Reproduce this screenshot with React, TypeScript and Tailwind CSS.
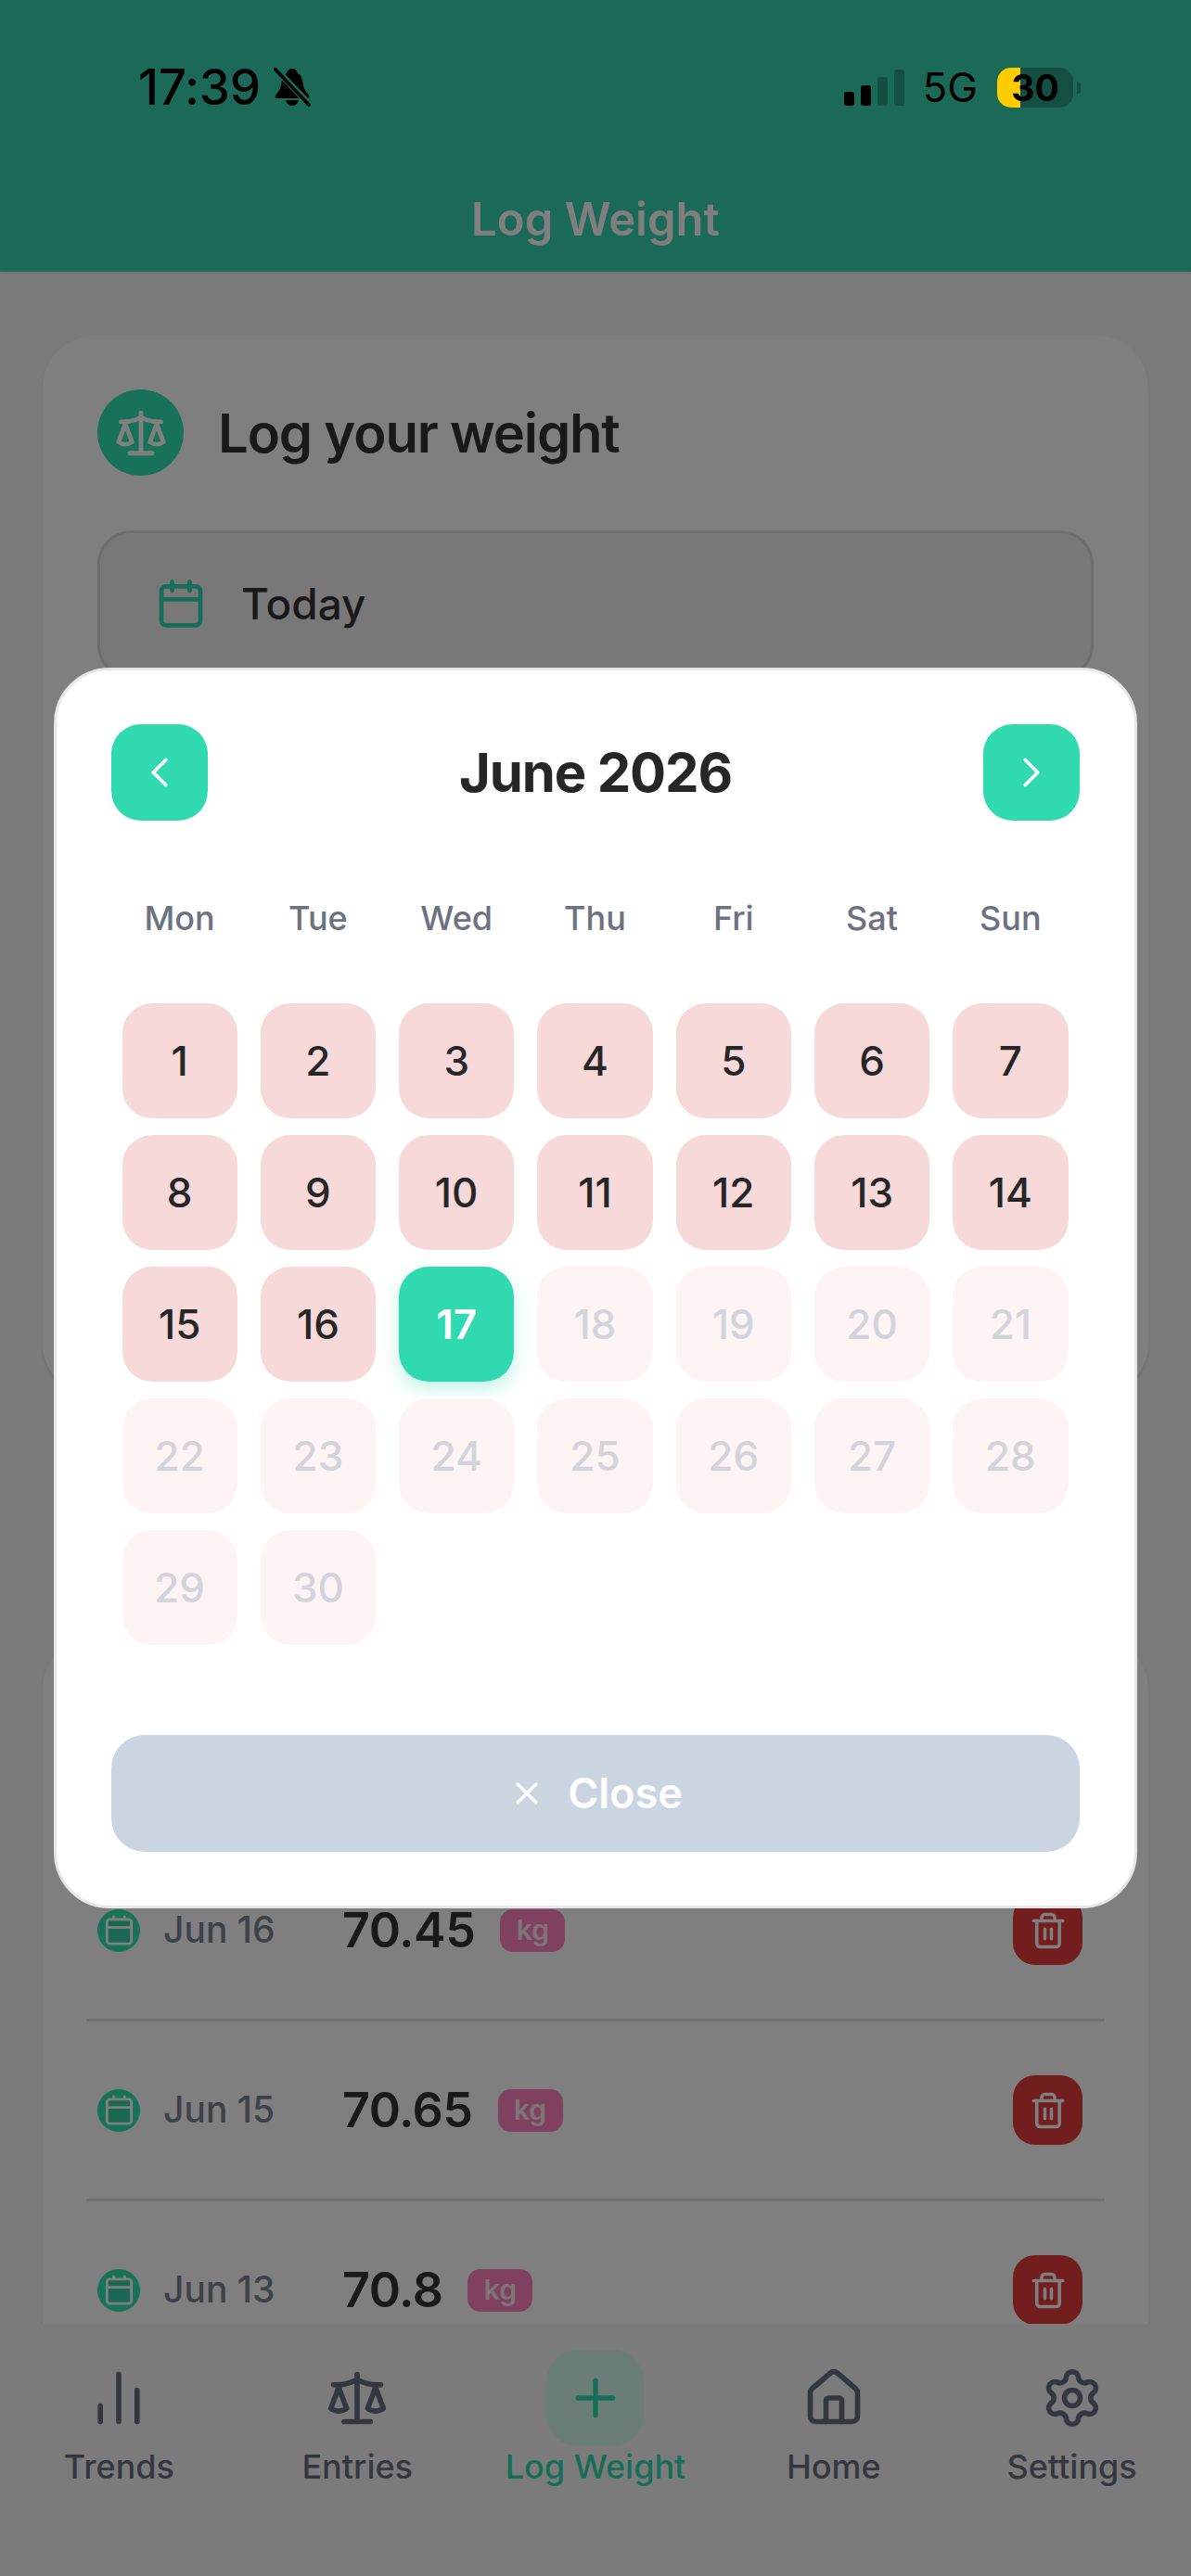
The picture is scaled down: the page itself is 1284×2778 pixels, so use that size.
import { Calendar, ChevronLeft, ChevronRight, ChartNoAxesColumn, House, Plus, Scale, Settings, Trash2, X } from "lucide-react";

const weekDays = ["Mon", "Tue", "Wed", "Thu", "Fri", "Sat", "Sun"];
const days = Array.from({ length: 30 }, (_, i) => i + 1);

const entries = [
  { date: "Jun 16", weight: "70.45" },
  { date: "Jun 15", weight: "70.65" },
  { date: "Jun 13", weight: "70.8" },
];

const navItems = [
  { label: "Trends", icon: ChartNoAxesColumn },
  { label: "Entries", icon: Scale },
  { label: "Log Weight", icon: Plus, active: true },
  { label: "Home", icon: House },
  { label: "Settings", icon: Settings },
];

function StatusBar() {
  return (
    <div className="absolute left-0 top-0 z-20 flex h-[190px] w-full items-start justify-between pl-[149px] pr-[119px] pt-[66px] text-black">
      <div className="flex items-center gap-[14px]">
        <span className="text-[53px] font-medium leading-[56px] tracking-[-0.005em]">17:39</span>
        <svg width="40" height="42" viewBox="0 0 40 42">
          <path d="M20 1c3 0 5 2 6 5 4 2 5 7 6 13 1 5 3 7 6 11 1 2 0 3-2 3H4c-2 0-3-1-2-3 3-4 5-6 6-11 1-6 2-11 6-13 1-3 3-5 6-5z" fill="#000" />
          <path d="M13 35h14c-1 4-4 6-7 6s-6-2-7-6z" fill="#000" />
          <path d="M2 1l37 39" stroke="#1b6a58" strokeWidth="7" />
          <path d="M1 1l37 39" stroke="#000" strokeWidth="3.5" strokeLinecap="round" />
        </svg>
      </div>
      <div className="flex items-center">
        <div className="flex items-end gap-[7px]">
          <div className="h-[15px] w-[11px] rounded-[3px] bg-black" />
          <div className="h-[22px] w-[11px] rounded-[3px] bg-black" />
          <div className="h-[31px] w-[11px] rounded-[3px] bg-black/25" />
          <div className="h-[39px] w-[11px] rounded-[3px] bg-black/25" />
        </div>
        <span className="ml-[19px] text-[44px] leading-[56px]">5G</span>
        <div className="relative ml-[21px] flex h-[43px] w-[82px] items-center justify-center">
          <div className="absolute inset-0 overflow-hidden rounded-[15px] bg-black/25">
            <div className="h-full w-[25px] bg-[#ffcc00]" />
          </div>
          <span className="relative text-[39px] font-bold leading-none">30</span>
        </div>
        <div className="ml-[4px] h-[13px] w-[4px] rounded-r-[3px] bg-black/25" />
      </div>
    </div>
  );
}

function CalendarModal() {
  return (
    <div className="absolute inset-0 z-10 flex justify-center bg-black/50 pt-[720px]">
      <div className="h-[1338px] w-[1168px] rounded-[60px] border-[3px] border-[#e5e7eb] bg-white px-[59px] pt-[58px]">
        <div className="flex items-center justify-between">
          <button className="flex h-[104px] w-[104px] items-center justify-center rounded-[32px] bg-[#30d9b0] text-white">
            <ChevronLeft size={54} strokeWidth={1.7} />
          </button>
          <span className="text-[58px] font-bold leading-none tracking-[-0.02em] text-[#262626]">June 2026</span>
          <button className="flex h-[104px] w-[104px] items-center justify-center rounded-[32px] bg-[#30d9b0] text-white">
            <ChevronRight size={54} strokeWidth={1.7} />
          </button>
        </div>

        <div className="-ml-[1px] mt-[75px] grid grid-cols-7">
          {weekDays.map((d) => (
            <div key={d} className="text-center text-[36px] font-medium leading-[60px] text-[#6b7280]">{d}</div>
          ))}
        </div>

        <div className="-ml-[1px] mt-[62px] grid h-[789px] grid-cols-7 content-start gap-y-[18px]">
          {days.map((d) => {
            let cls = "bg-[#fef4f3] text-[#d1d5db] font-medium";
            if (d < 17) cls = "bg-[#f8d9da] text-[#262626] font-medium";
            if (d === 17) cls = "bg-[#30d9b0] text-white font-semibold shadow-[0_8px_20px_rgba(48,217,176,0.3)]";
            return (
              <div key={d} className={`mx-[12.5px] flex h-[124px] items-center justify-center rounded-[32px] text-[44px] ${cls}`}>
                {d}
              </div>
            );
          })}
        </div>

        <button className="flex h-[126px] w-full items-center justify-center gap-[24px] rounded-[36px] bg-[#cbd5e1] text-[45px] font-semibold text-white">
          <X size={40} strokeWidth={2} />
          Close
        </button>
      </div>
    </div>
  );
}

export default function App() {
  return (
    <div className="relative flex h-[2778px] w-[1284px] flex-col overflow-hidden bg-[#f7f7f7] font-[Inter,sans-serif]">
      <StatusBar />

      <header className="flex h-[293px] shrink-0 items-end justify-center bg-[#36d4b0] pb-[28px] shadow-sm">
        <h1 className="text-[49px] font-semibold leading-[56px] text-white">Log Weight</h1>
      </header>

      <main className="min-h-0 flex-1 overflow-hidden px-[46px] pt-[69px]">
        <section className="h-[1143px] rounded-[56px] bg-white px-[59px] pt-[58px] shadow-md">
          <div className="flex items-center gap-[37px]">
            <div className="flex h-[93px] w-[93px] items-center justify-center rounded-full bg-[#30e4b4] text-white">
              <Scale size={58} strokeWidth={2} />
            </div>
            <h2 className="text-[58px] font-semibold leading-[84px] tracking-[-0.02em] text-[#333]">Log your weight</h2>
          </div>
          <div className="mt-[59px] flex h-[160px] items-center gap-[37px] rounded-[36px] border-[3px] border-[#dddddd] bg-[#f1f1f1] pb-[2px] pl-[59px]">
            <Calendar size={56} strokeWidth={2} className="text-[#2cdcb0]" />
            <span className="text-[46px] font-medium text-[#333]">Today</span>
          </div>
        </section>

        <section className="mt-[260px] rounded-t-[56px] bg-white px-[47px] pt-[221px] shadow-md">
          {entries.map((e) => (
            <div key={e.date} className="flex h-[194px] items-center border-b-[3px] border-[#e0e0e0] pl-[12px] pr-[24px]">
              <div className="flex h-[46px] w-[46px] items-center justify-center rounded-full bg-[#30e4b4] text-white">
                <Calendar size={35} strokeWidth={2} className="fill-[#34d0a8]" />
              </div>
              <span className="ml-[25px] w-[193px] text-[39px] font-medium text-[#7b8494]">{e.date}</span>
              <span className="text-[52px] font-semibold tracking-[-0.01em] text-[#333]">{e.weight}</span>
              <span className="ml-[27px] flex h-[46px] w-[70px] items-center justify-center rounded-[14px] bg-[#ff82be] text-[30px] font-semibold text-white/80">kg</span>
              <button className="ml-auto flex h-[75px] w-[75px] items-center justify-center rounded-[24px] bg-[#e63c3c] text-white">
                <Trash2 size={42} strokeWidth={2} />
              </button>
            </div>
          ))}
        </section>
      </main>

      <nav className="z-[1] grid h-[272px] shrink-0 grid-cols-5 bg-[#f7f7f7] pt-[28px]">
        {navItems.map((item) => {
          const Icon = item.icon;
          return (
            <div key={item.label} className="flex flex-col items-center">
              <div className={`flex h-[104px] w-[105px] items-center justify-center rounded-[34px] ${item.active ? "bg-[#d6fbee] text-[#2cdcb0]" : "text-[#677080]"}`}>
                <Icon size={item.active ? 64 : 68} strokeWidth={2} />
              </div>
              <span className={`text-[36px] font-medium leading-[44px] ${item.active ? "text-[#2cdcb0]" : "text-[#677080]"}`}>{item.label}</span>
            </div>
          );
        })}
      </nav>

      <CalendarModal />
    </div>
  );
}
